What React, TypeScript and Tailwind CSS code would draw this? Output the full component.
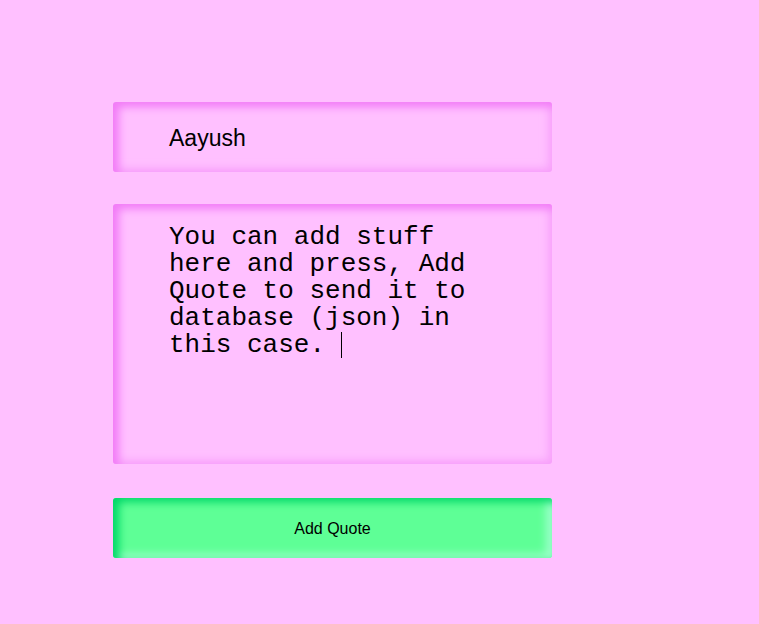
import React from "react";

const App: React.FC = () => {
  return (
    <div className="min-h-[624px] w-full bg-[#ffc0ff] pt-[102px] pl-[113px]">
      <div className="flex w-[439px] flex-col">
        {/* author input */}
        <div className="flex h-[70px] items-center rounded-[3px] bg-[#ffc0ff] pt-[3px] pl-14 shadow-[inset_6px_5px_9px_#f27cf7,inset_-4px_-4px_8px_#f8a4fb]">
          <span className="font-['Liberation_Sans',Arial,sans-serif] text-[23px] text-black">
            Aayush
          </span>
        </div>

        {/* quote textarea */}
        <div className="mt-[32px] h-[260px] rounded-[3px] bg-[#ffc0ff] pt-5 pr-14 pl-14 shadow-[inset_6px_5px_9px_#f27cf7,inset_-4px_-4px_8px_#f8a4fb]">
          <p className="font-['Liberation_Mono','Courier_New',monospace] text-[26px] leading-[27px] text-black">
            You can add stuff here and press, Add Quote to send it to database
            (json) in this case.{" "}
            <span className="inline-block h-[26px] w-px bg-black align-top" />
          </p>
        </div>

        {/* submit */}
        <button className="mt-[34px] flex h-[60px] items-center justify-center rounded-[3px] bg-[#5eff96] pt-px shadow-[inset_6px_4px_8px_#00d868,inset_-6px_-4px_8px_#9cffca]">
          <span className="font-['Liberation_Sans',Arial,sans-serif] text-[16px] text-black">
            Add Quote
          </span>
        </button>
      </div>
    </div>
  );
};

export default App;
